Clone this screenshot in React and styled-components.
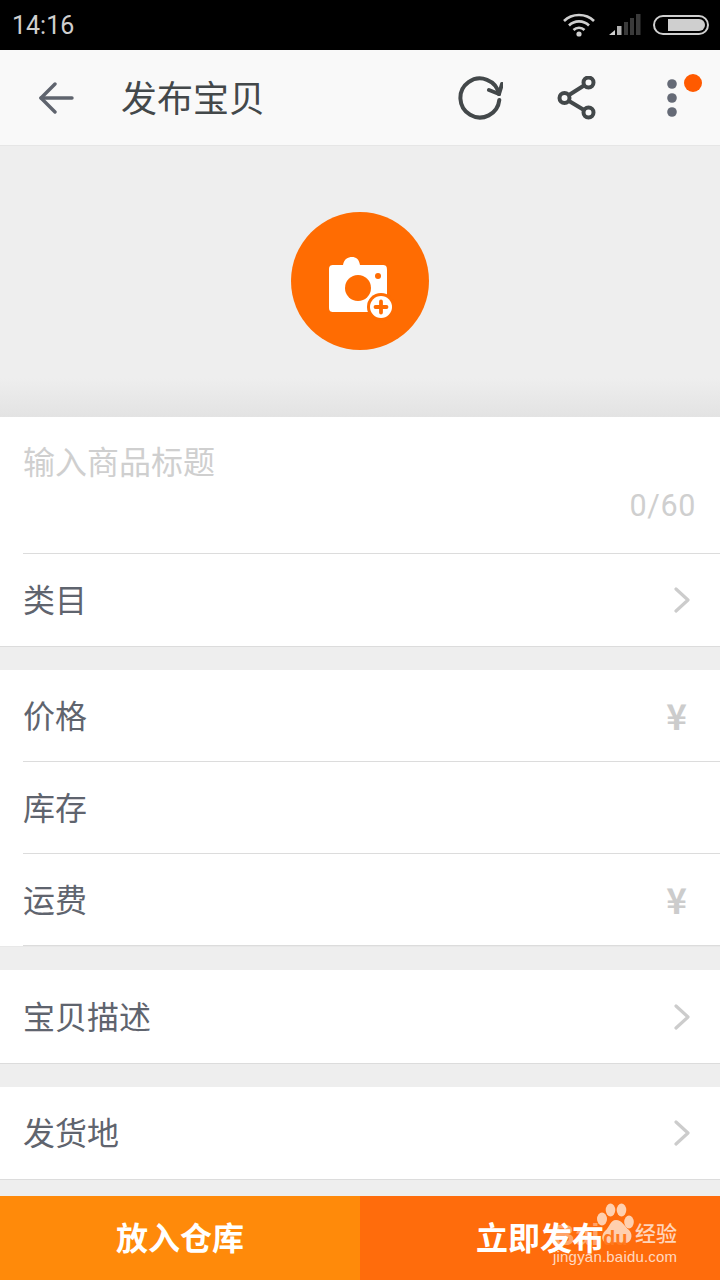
import React from "react";
import styled, { createGlobalStyle } from "styled-components";

const GlobalStyle = createGlobalStyle`
  html, body { margin: 0; padding: 0; background: #eeeeee; }
  body { font-family: "Roboto", "Noto Sans CJK SC", sans-serif; }
`;

const Page = styled.div`
  position: relative;
  width: 720px;
  height: 1280px;
  overflow: hidden;
  background: #eeeeee;
  display: flex;
  flex-direction: column;
`;

const StatusBar = styled.div`
  height: 50px;
  background: #000;
  display: flex;
  align-items: center;
  padding: 0 11px 0 12px;
  box-sizing: border-box;
  color: #cfcfcf;
`;

const Clock = styled.span`
  font-family: "Roboto", sans-serif;
  font-size: 25px;
  flex: 1;
  margin-top: 1px;
`;

const StatusIcons = styled.div`
  display: flex;
  align-items: center;
  gap: 12px;
`;

const WifiMark = styled.svg`
  margin-right: 1px;
`;

const Toolbar = styled.div`
  height: 96px;
  box-sizing: border-box;
  background: #f9f9f9;
  border-bottom: 1px solid #e6e6e6;
  display: flex;
  align-items: center;
`;

const BackSlot = styled.div`
  width: 121px;
  padding-left: 38px;
  box-sizing: border-box;
  display: flex;
`;

const Title = styled.h1`
  margin: 0 0 4px;
  flex: 1;
  font-size: 36px;
  font-weight: 400;
  color: #43484a;
  font-family: "Noto Sans CJK SC", sans-serif;
`;

const ToolIcons = styled.div`
  display: flex;
  align-items: center;
`;

const ToolIcon = styled.div`
  position: relative;
  width: 96px;
  display: flex;
  justify-content: center;
`;

const RedDot = styled.span`
  position: absolute;
  top: -5px;
  left: 60px;
  width: 18px;
  height: 18px;
  border-radius: 50%;
  background: #ff5a00;
`;

const PhotoArea = styled.div`
  height: 271px;
  box-sizing: border-box;
  padding-top: 66px;
  display: flex;
  justify-content: center;
  align-items: flex-start;
  background: linear-gradient(to bottom, #eeeeee 0, #eeeeee 232px, #e3e3e3 100%);
`;

const PhotoButton = styled.div`
  width: 138px;
  height: 138px;
  border-radius: 50%;
  background: #ff6c02;
  display: flex;
  align-items: center;
  justify-content: center;
`;

const TitleBlock = styled.div`
  background: #fff;
  height: 136px;
  box-sizing: border-box;
  padding: 21px 24px 0 23px;
  display: flex;
  flex-direction: column;
`;

const Placeholder = styled.div`
  font-size: 32px;
  line-height: 44px;
  color: #cfcfcf;
  font-family: "Noto Sans CJK SC", sans-serif;
`;

const Counter = styled.div`
  font-family: "Roboto", sans-serif;
  font-size: 30.5px;
  line-height: 36px;
  margin-top: 6px;
  color: #cfcfcf;
  text-align: right;
  letter-spacing: 0.6px;
`;

const Group = styled.div`
  background: #fff;
  border-bottom: 1px solid ${(p) => p.$line || "#dcdcdc"};
  margin-bottom: ${(p) => p.$gap}px;
`;

const Row = styled.div`
  height: ${(p) => p.$h || 92}px;
  box-sizing: border-box;
  margin-left: 23px;
  border-top: ${(p) => (p.$divided ? "1px solid #dcdcdc" : "none")};
  border-bottom: ${(p) => (p.$closed ? "1px solid #dcdcdc" : "none")};
  display: flex;
  align-items: center;
  justify-content: space-between;
  padding-right: 29px;
`;

const Label = styled.span`
  font-size: 32px;
  padding-bottom: 4px;
  color: #5f646e;
  font-family: "Noto Sans CJK SC", sans-serif;
`;

const Yen = styled.span`
  font-family: "Noto Sans CJK SC", sans-serif;
  font-size: 35px;
  font-weight: 700;
  color: #cccccc;
  margin-right: 4px;
  padding-bottom: 2px;
`;

const ActionBar = styled.div`
  position: absolute;
  left: 0;
  right: 0;
  bottom: 0;
  height: 84px;
  display: flex;
`;

const ActionButton = styled.div`
  flex: 1;
  display: flex;
  align-items: center;
  justify-content: center;
  padding-bottom: 5px;
  background: ${(p) => p.$bg};
  color: #fff;
  font-size: 32px;
  font-weight: 700;
  font-family: "Noto Sans CJK SC", sans-serif;
`;

const Watermark = styled.div`
  position: absolute;
  left: 552px;
  top: 1200px;
  width: 140px;
  height: 70px;
  color: rgba(255, 255, 255, 0.75);
`;

const WatermarkBai = styled.span`
  position: absolute;
  left: 1px;
  top: 19px;
  font-size: 30px;
  line-height: 32px;
  font-weight: 700;
  font-family: "Liberation Sans", sans-serif;
  color: rgba(255, 255, 255, 0.4);
`;

const WatermarkDu = styled.span`
  position: absolute;
  left: 51px;
  top: 28px;
  font-size: 20px;
  line-height: 20px;
  font-weight: 700;
  font-family: "Liberation Sans", sans-serif;
  color: #ff7a1e;
`;

const WatermarkWord = styled.span`
  position: absolute;
  left: 83px;
  top: 19px;
  font-size: 21px;
  line-height: 26px;
  font-weight: 500;
  color: rgba(255, 255, 255, 0.72);
  font-family: "Noto Sans CJK SC", sans-serif;
`;

const WatermarkUrl = styled.span`
  position: absolute;
  left: 1px;
  top: 47px;
  font-size: 15px;
  line-height: 20px;
  font-family: "Liberation Sans", sans-serif;
  letter-spacing: 0.2px;
  white-space: nowrap;
`;

const PawMark = styled.svg`
  position: absolute;
  left: 44px;
  top: 3px;
`;

const Chevron = () => (
  <svg width="18" height="26" viewBox="0 0 18 26" fill="none" stroke="#cccccc" strokeWidth="3.2" strokeLinecap="round" strokeLinejoin="round">
    <path d="M3 2 L15 13 L3 24" />
  </svg>
);

const Wifi = () => (
  <WifiMark width="34" height="26" viewBox="0 0 34 26" fill="none" stroke="#cfcfcf" strokeWidth="2.6">
    <path d="M2 9 C10 1 24 1 32 9" />
    <path d="M7 13.5 C12.5 8 21.5 8 27 13.5" />
    <path d="M11.5 18 C14.5 15 19.5 15 22.5 18" />
    <circle cx="17" cy="22" r="2.6" fill="#cfcfcf" stroke="none" />
  </WifiMark>
);

const Signal = () => (
  <svg width="32" height="22" viewBox="0 0 32 22">
    <path d="M0 21 L6 16 V21 Z" fill="#d0d0d0" />
    <rect x="8" y="12" width="4.5" height="9" fill="#b0b0b0" />
    <rect x="15" y="8" width="4" height="13" fill="#3a3a3a" />
    <rect x="21" y="4" width="4" height="17" fill="#3a3a3a" />
    <rect x="27" y="0" width="4.5" height="21" fill="#3a3a3a" />
  </svg>
);

const Battery = () => (
  <svg width="56" height="20" viewBox="0 0 56 20">
    <rect x="1" y="1" width="54" height="18" rx="9" fill="none" stroke="#cfcfcf" strokeWidth="2" />
    <path d="M15 4 H46 A6 6 0 0 1 46 16 H15 Z" fill="#cfcfcf" />
  </svg>
);

const BackArrow = () => (
  <svg width="36" height="32" viewBox="0 0 36 32" fill="none" stroke="#5f646e" strokeWidth="3.4" strokeLinecap="round" strokeLinejoin="round">
    <path d="M34 16 H3" />
    <path d="M17 2 L3 16 L17 30" />
  </svg>
);

const Refresh = () => (
  <svg width="46" height="44" viewBox="0 0 46 44" fill="none" stroke="#43484a" strokeWidth="4" strokeLinecap="round" strokeLinejoin="round">
    <path d="M42.3 24 A19.5 19.5 0 1 1 42 18" />
    <path d="M32 14 L42 18 L45 8" />
  </svg>
);

const Share = () => (
  <svg width="40" height="44" viewBox="0 0 40 44" fill="none" stroke="#43484a" strokeWidth="4">
    <path d="M13 19 L28 9.5 M13 25 L28 34" />
    <circle cx="8.5" cy="22" r="5" />
    <circle cx="32.5" cy="6.5" r="5" />
    <circle cx="32.5" cy="36.5" r="5" />
  </svg>
);

const Dots = () => (
  <svg width="10" height="38" viewBox="0 0 10 38" fill="#656a76">
    <circle cx="5" cy="5" r="4.8" />
    <circle cx="5" cy="19" r="4.8" />
    <circle cx="5" cy="33" r="4.8" />
  </svg>
);

const Camera = () => (
  <svg width="80" height="80" viewBox="0 0 80 80">
    <path
      fill="#fff"
      d="M14 24 H23 C24 18 28 16 32 16 C36 16 39 18 40 24 H62 C66 24 67 25 67 29 V66 C67 70 66 71 62 71 H14 C10 71 9 70 9 66 V29 C9 25 10 24 14 24 Z"
    />
    <circle cx="38" cy="47" r="13" fill="#ff6c02" />
    <circle cx="58" cy="35" r="3" fill="#ff6c02" />
    <circle cx="61" cy="66" r="14" fill="#ff6c02" />
    <circle cx="61" cy="66" r="11" fill="#fff" />
    <path d="M61 60.5 V71.5 M55.5 66 H66.5" stroke="#ff6c02" strokeWidth="3.8" strokeLinecap="round" />
  </svg>
);

const Paw = () => (
  <PawMark width="40" height="44" viewBox="0 0 40 44" fill="rgba(255,226,204,0.85)">
    <ellipse cx="6" cy="16" rx="5" ry="6.5" />
    <ellipse cx="14.5" cy="7" rx="4.8" ry="6.5" />
    <ellipse cx="25.5" cy="7" rx="4.8" ry="6.5" />
    <ellipse cx="33" cy="19" rx="4.8" ry="6.5" />
    <path d="M20 17 C26 17 28 23 33 27 C38 32 35 41 28 40 C23 39 17 39 13 40 C6 41 4 33 9 28 C14 24 14 17 20 17 Z" />
  </PawMark>
);

function App() {
  return (
    <Page>
      <GlobalStyle />
      <StatusBar>
        <Clock>14:16</Clock>
        <StatusIcons>
          <Wifi />
          <Signal />
          <Battery />
        </StatusIcons>
      </StatusBar>
      <Toolbar>
        <BackSlot><BackArrow /></BackSlot>
        <Title>发布宝贝</Title>
        <ToolIcons>
          <ToolIcon><Refresh /></ToolIcon>
          <ToolIcon><Share /></ToolIcon>
          <ToolIcon><Dots /><RedDot /></ToolIcon>
        </ToolIcons>
      </Toolbar>
      <PhotoArea>
        <PhotoButton><Camera /></PhotoButton>
      </PhotoArea>
      <TitleBlock>
        <Placeholder>输入商品标题</Placeholder>
        <Counter>0/60</Counter>
      </TitleBlock>
      <Group $gap={23}>
        <Row $divided $h={93}>
          <Label>类目</Label>
          <Chevron />
        </Row>
      </Group>
      <Group $gap={23} $line="#e8e8e8">
        <Row $h={91}>
          <Label>价格</Label>
          <Yen>¥</Yen>
        </Row>
        <Row $divided>
          <Label>库存</Label>
        </Row>
        <Row $divided $closed $h={93}>
          <Label>运费</Label>
          <Yen>¥</Yen>
        </Row>
      </Group>
      <Group $gap={23}>
        <Row $h={93}>
          <Label>宝贝描述</Label>
          <Chevron />
        </Row>
      </Group>
      <Group $gap={0}>
        <Row>
          <Label>发货地</Label>
          <Chevron />
        </Row>
      </Group>
      <ActionBar>
        <ActionButton $bg="#ff8a0a">放入仓库</ActionButton>
        <ActionButton $bg="#ff6c0c">立即发布</ActionButton>
      </ActionBar>
      <Watermark>
        <WatermarkBai>Bai</WatermarkBai>
        <Paw />
        <WatermarkDu>du</WatermarkDu>
        <WatermarkWord>经验</WatermarkWord>
        <WatermarkUrl>jingyan.baidu.com</WatermarkUrl>
      </Watermark>
    </Page>
  );
}

export default App;
